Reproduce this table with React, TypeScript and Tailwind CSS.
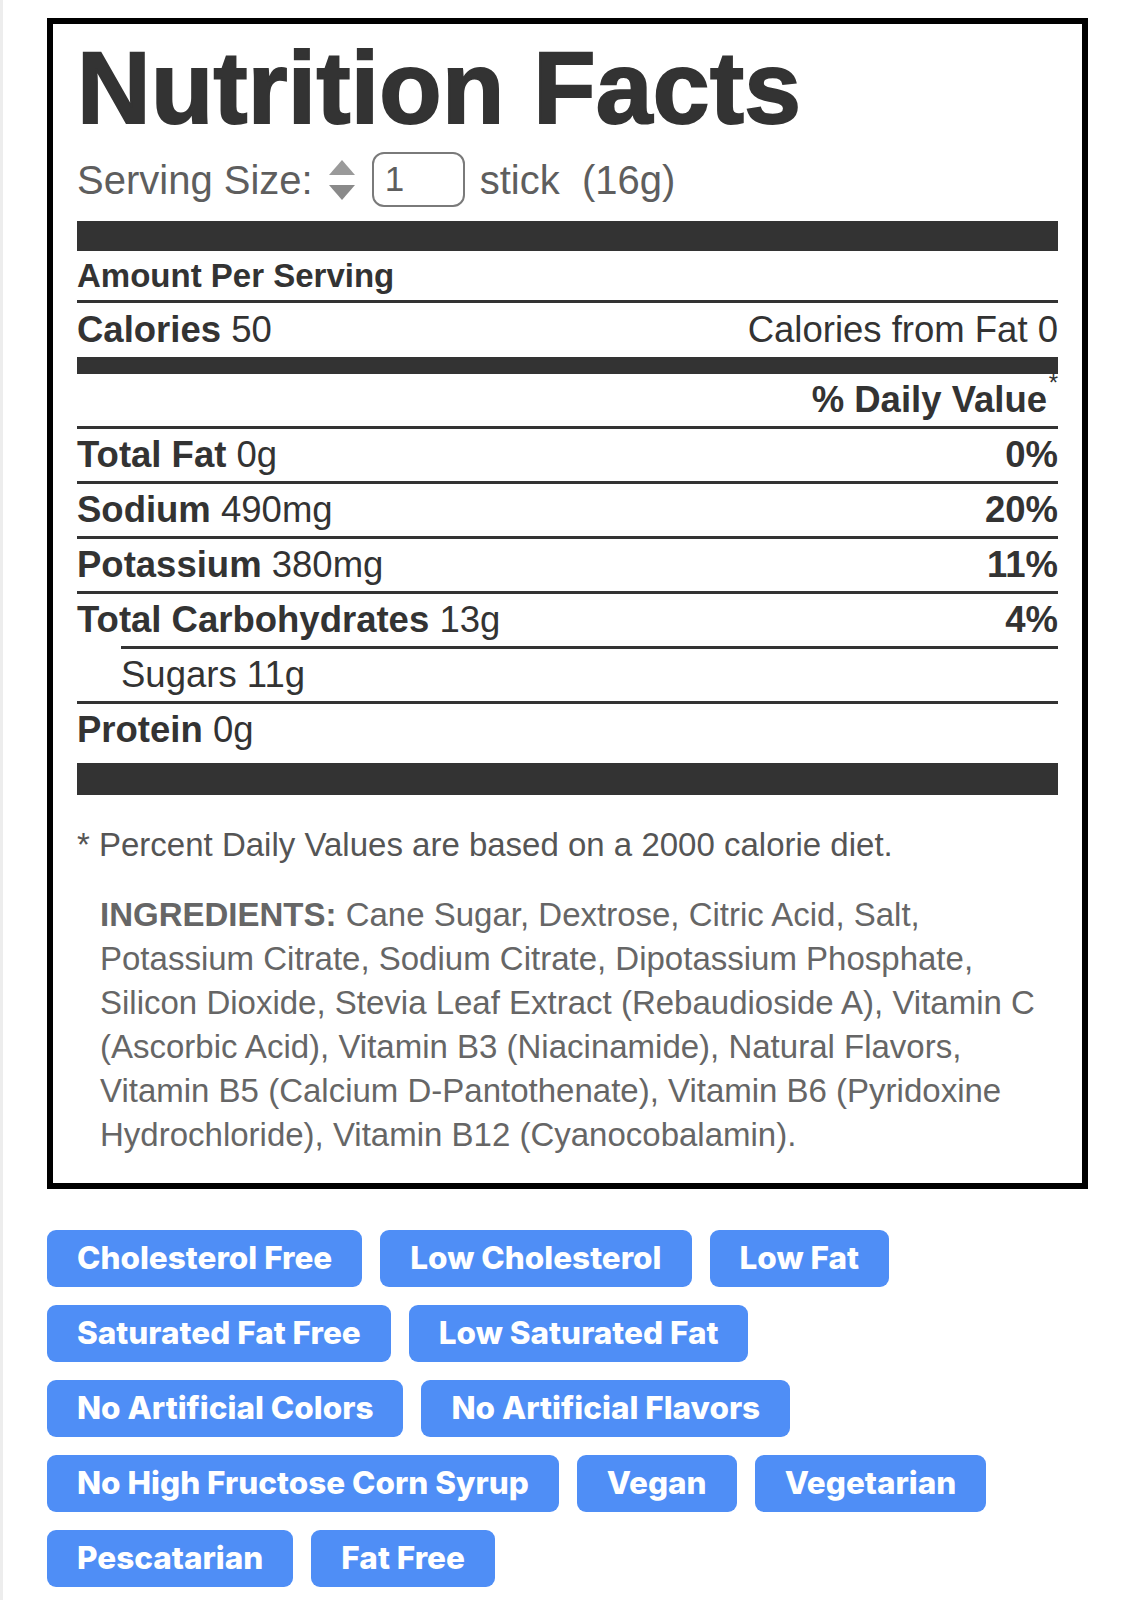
import React from "react";

// 영양성분표 + 특징 뱃지
const nutrients = [
  { name: "Total Fat", amount: "0g", dv: "0%" },
  { name: "Sodium", amount: "490mg", dv: "20%" },
  { name: "Potassium", amount: "380mg", dv: "11%" },
  { name: "Total Carbohydrates", amount: "13g", dv: "4%" },
  { name: "Sugars", amount: "11g", sub: true },
  { name: "Protein", amount: "0g" },
];

const badges = [
  "Cholesterol Free",
  "Low Cholesterol",
  "Low Fat",
  "Saturated Fat Free",
  "Low Saturated Fat",
  "No Artificial Colors",
  "No Artificial Flavors",
  "No High Fructose Corn Syrup",
  "Vegan",
  "Vegetarian",
  "Pescatarian",
  "Fat Free",
];

const Spinner = () => (
  <svg width="26" height="40" viewBox="0 0 26 40" className="ml-[16px]">
    <polygon points="13,0 26,15 0,15" fill="#9a9a9a" />
    <polygon points="0,25 26,25 13,40" fill="#8a8a8a" />
  </svg>
);

const App = () => {
  return (
    <div className="min-h-[1600px] bg-white pt-[18px] pl-[44px] pr-[46px] border-l-[3px] border-[#ededed] font-['Liberation_Sans',Arial,sans-serif]">
      {/* 라벨 박스 */}
      <div className="border-[6px] border-black px-[24px] pb-[26px]">
        <h1 className="pt-[13px] text-[102px] leading-[102px] font-bold tracking-[0.3px] text-[#333] [-webkit-text-stroke:2px_#333]">
          Nutrition Facts
        </h1>

        {/* 1회 제공량 */}
        <div className="mt-[13px] h-[55px] flex items-center text-[40px] text-[#5e5e5e]">
          <span>Serving Size:</span>
          <Spinner />
          <div className="ml-[17px] w-[93px] h-[55px] border-2 border-[#7a7a7a] rounded-[12px] flex items-center pl-[11px] text-[35px]">
            1
          </div>
          <span className="ml-[15px]">stick&nbsp;&nbsp;(16g)</span>
        </div>

        <div className="mt-[14px] h-[30px] bg-[#333]" />

        <div className="h-[49px] flex items-center text-[33px] font-bold text-[#333]">Amount Per Serving</div>
        <div className="h-[3px] bg-[#333]" />

        <div className="h-[54px] flex items-center justify-between text-[36.5px] text-[#333]">
          <span>
            <b>Calories</b> 50
          </span>
          <span>Calories from Fat 0</span>
        </div>
        <div className="h-[17px] bg-[#333]" />

        <div className="h-[52px] flex items-center justify-end text-[36.5px] font-bold text-[#333]">
          <span className="relative pr-[11px]">
            % Daily Value
            <span className="absolute right-0 -top-[8px] text-[24px] font-normal">*</span>
          </span>
        </div>

        {nutrients.map((n) => (
          <div key={n.name} className={n.sub ? "ml-[44px]" : ""}>
            <div className="h-[3px] bg-[#333]" />
            <div className="h-[52px] flex items-center justify-between text-[36.5px] text-[#333]">
              <span>
                {n.sub ? n.name : <b>{n.name}</b>} {n.amount}
              </span>
              {n.dv && <b>{n.dv}</b>}
            </div>
          </div>
        ))}

        <div className="mt-[7px] h-[32px] bg-[#333]" />

        <p className="mt-[25px] text-[33px] text-[#555]">* Percent Daily Values are based on a 2000 calorie diet.</p>

        <p className="mt-[23px] pl-[23px] pr-[10px] text-[33px] leading-[44px] text-[#666]">
          <b>INGREDIENTS:</b> Cane Sugar, Dextrose, Citric Acid, Salt, Potassium Citrate, Sodium Citrate,
          Dipotassium Phosphate, Silicon Dioxide, Stevia Leaf Extract (Rebaudioside A), Vitamin C (Ascorbic Acid),
          Vitamin B3 (Niacinamide), Natural Flavors, Vitamin B5 (Calcium D-Pantothenate), Vitamin B6 (Pyridoxine
          Hydrochloride), Vitamin B12 (Cyanocobalamin).
        </p>
      </div>

      {/* 뱃지 목록 */}
      <div className="mt-[41px] flex flex-wrap gap-[18px]">
        {badges.map((b) => (
          <span
            key={b}
            className="h-[57px] px-[30px] flex items-center rounded-[9px] bg-[#4f8ef6] text-white text-[31.5px] font-extrabold font-['Inter',sans-serif]"
          >
            {b}
          </span>
        ))}
      </div>
    </div>
  );
};

export default App;
